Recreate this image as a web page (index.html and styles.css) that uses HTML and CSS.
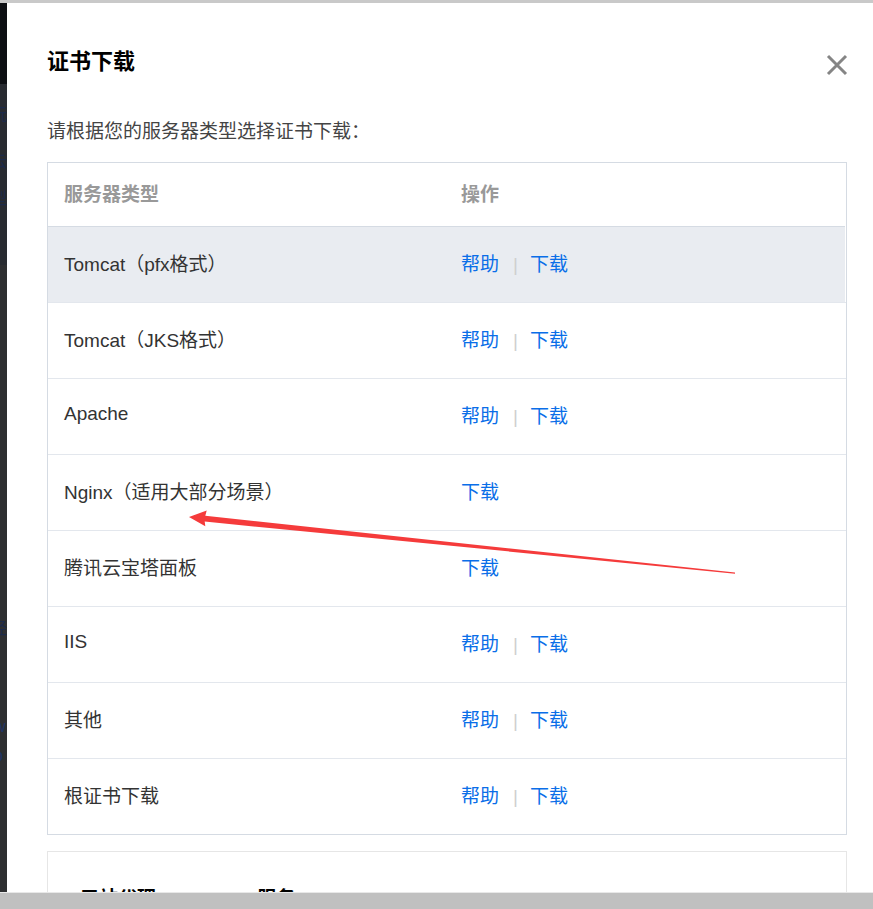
FILE: index.html
```html
<!DOCTYPE html>
<html lang="zh-CN">
<head>
    <meta charset="UTF-8">
    <meta name="viewport" content="width=device-width, initial-scale=1.0">
    <title>证书下载</title>
    <link rel="stylesheet" href="styles.css">
</head>
<body>

    <div class="topline"></div>

    <div class="main">
        <div class="side">
            <span class="side-text t1">玩</span>
            <span class="side-text t2">云</span>
            <span class="side-text t3">型</span>
            <span class="side-text t4">经</span>
            <span class="side-text t5">w</span>
            <span class="side-text t6">b</span>
        </div>

        <div class="modal">
            <div class="modal-head">
                <h2>证书下载</h2>
                <button class="close" aria-label="关闭">
                    <svg width="22" height="22" viewBox="0 0 22 22">
                        <path d="M2 2 L20 20 M20 2 L2 20" stroke="#858585" stroke-width="3" fill="none"/>
                    </svg>
                </button>
            </div>

            <p class="desc">请根据您的服务器类型选择证书下载：</p>

            <div class="table">
                <div class="row head">
                    <div class="cell">服务器类型</div>
                    <div class="cell">操作</div>
                </div>
                <div class="row hover">
                    <div class="cell">Tomcat（pfx格式）</div>
                    <div class="cell"><a href="#">帮助</a><span class="sep">|</span><a href="#">下载</a></div>
                </div>
                <div class="row">
                    <div class="cell">Tomcat（JKS格式）</div>
                    <div class="cell"><a href="#">帮助</a><span class="sep">|</span><a href="#">下载</a></div>
                </div>
                <div class="row">
                    <div class="cell">Apache</div>
                    <div class="cell"><a href="#">帮助</a><span class="sep">|</span><a href="#">下载</a></div>
                </div>
                <div class="row">
                    <div class="cell">Nginx（适用大部分场景）</div>
                    <div class="cell"><a href="#">下载</a></div>
                </div>
                <div class="row">
                    <div class="cell">腾讯云宝塔面板</div>
                    <div class="cell"><a href="#">下载</a></div>
                </div>
                <div class="row">
                    <div class="cell">IIS</div>
                    <div class="cell"><a href="#">帮助</a><span class="sep">|</span><a href="#">下载</a></div>
                </div>
                <div class="row">
                    <div class="cell">其他</div>
                    <div class="cell"><a href="#">帮助</a><span class="sep">|</span><a href="#">下载</a></div>
                </div>
                <div class="row">
                    <div class="cell">根证书下载</div>
                    <div class="cell"><a href="#">帮助</a><span class="sep">|</span><a href="#">下载</a></div>
                </div>
            </div>

            <div class="card">
                <div class="card-title">
                    <span>三站代理</span>
                    <span class="card-right">服务</span>
                </div>
            </div>
        </div>
    </div>

    <div class="bottombar"></div>

    <!-- annotation arrow drawn over the screenshot -->
    <svg class="arrow" width="873" height="909" viewBox="0 0 873 909">
        <polygon fill="#f53b3b" points="189,517 206.7,510.5 205.3,515.8 735,572.5 735,573.7 204.7,521.6 205.3,526.3"/>
    </svg>

</body>
</html>
```

FILE: styles.css
```css
body {
    margin: 0;
    width: 873px;
    height: 909px;
    overflow: hidden;
    font-family: "Liberation Sans", "Noto Sans CJK SC", sans-serif;
    background-color: #2f2f2f;
    display: flex;
    flex-direction: column;
}
.topline {
    height: 3px;
    background-color: #c9c9c9;
}
.main {
    flex: 1;
    display: flex;
    overflow: hidden;
}
.side {
    width: 7px;
    flex-shrink: 0;
    position: relative;
    overflow: hidden;
    background: linear-gradient(to bottom, #0d0f13 0, #0d0f13 81px, #282b31 81px, #282b31 262px, #2e2f31 262px);
}
.side-text {
    position: absolute;
    left: -9px;
    font-size: 16px;
    color: #1c2a4a;
}
.t1 { top: 98px; }
.t2 { top: 145px; }
.t3 { top: 182px; }
.t4 { top: 612px; }
.t5 { top: 715px; left: -6px; color: #1f3566; }
.t6 { top: 744px; left: -6px; color: #1f3566; }

.modal {
    flex: 1;
    background-color: #fff;
    padding: 41px 26px 0 40px;
}
.modal-head {
    display: flex;
    justify-content: space-between;
    align-items: center;
    height: 30px;
}
.modal-head h2 {
    margin: 0;
    font-size: 22px;
    font-weight: bold;
    color: #000;
}
.close {
    border: none;
    background: none;
    padding: 0;
    margin-top: 12px;
    margin-right: -1px;
    width: 22px;
    height: 22px;
    cursor: pointer;
}
.desc {
    margin: 0;
    margin-top: 43px;
    font-size: 19px;
    line-height: 30px;
    color: #444;
}
.table {
    margin-top: 15px;
    border: 1px solid #d5dbe3;
}
.row {
    display: grid;
    grid-template-columns: 397px 1fr;
    height: 75px;
    align-items: center;
    border-top: 1px solid #e3e7ed;
    font-size: 19px;
    color: #333;
}
.row.head {
    height: 63px;
    border-top: none;
    color: #999;
    font-weight: bold;
}
.row.head + .row {
    border-top-color: #d5dbe3;
}
.row.hover {
    background-color: #e9ecf1;
    margin-right: 1px;
}
.cell {
    padding-left: 16px;
    padding-bottom: 5px;
}
.cell a {
    color: #0a6ee8;
    text-decoration: none;
}
.sep {
    color: #cfcfcf;
    margin: 0 12px 0 14px;
}
.card {
    margin-top: 16px;
    height: 100px;
    border: 1px solid #e6e6e6;
}
.card-title {
    padding: 31px 0 0 32px;
    font-size: 19px;
    font-weight: bold;
    color: #000;
}
.card-right {
    margin-left: 96px;
}
.bottombar {
    height: 16px;
    border-top: 1px solid #e8e8e8;
    background-color: #c0c0c0;
    flex-shrink: 0;
}
.arrow {
    position: absolute;
    left: 0;
    top: 0;
    pointer-events: none;
}
```
